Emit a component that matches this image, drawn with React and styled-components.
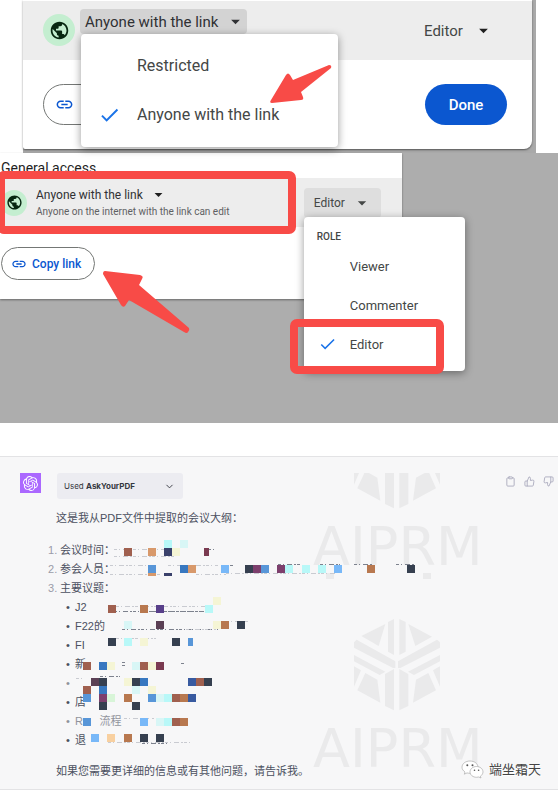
import React from 'react';
import styled, { createGlobalStyle, css } from 'styled-components';
import { SiOpenai } from 'react-icons/si';
import { MdPublic, MdLink, MdCheck, MdArrowDropDown } from 'react-icons/md';
import { FiClipboard, FiThumbsUp, FiThumbsDown, FiChevronDown } from 'react-icons/fi';

const C = {
  brick: '#a0604f',
  peach: '#d8996b',
  navy: '#3a416b',
  cyan: '#b8f8f8',
  ice: '#d8f6f6',
  cream: '#f5f5d5',
  wine: '#7a3a50',
  blue: '#5896d8',
  azure: '#3878c0',
  sky: '#78b8f8',
  dark: '#364050',
  plum: '#7d3f6d',
  copper: '#b8784f',
  violet: '#583f8a',
  mauve: '#5b4055',
  royal: '#385aa0',
  mint: '#d8f5d8',
  sand: '#f8d0a0'
}

// blocks that hide the private parts of the outline: x, y, colour, width, height
const blocks = [
  [108, 0, 'cyan'], [124, 0, 'ice'],
  [68, 8, 'brick'], [92, 8, 'peach'], [108, 8, 'navy'], [116, 8, 'cream'], [148, 8, 'wine', 5],
  [92, 25, 'blue'], [92, 33, 'peach', 8, 3], [108, 33, 'navy', 8, 3], [124, 25, 'azure'], [132, 25, 'peach'],
  [165, 25, 'sky'], [189, 25, 'dark'], [197, 25, 'plum'], [205, 25, 'blue'], [221, 25, 'plum'], [229, 25, 'cyan'],
  [246, 25, 'cyan'], [262, 25, 'cyan'], [278, 25, 'sky'], [311, 25, 'copper'], [351, 25, 'dark'],
  [157, 57, 'cream'], [52, 65, 'brick'], [84, 65, 'copper'], [100, 65, 'violet'], [149, 65, 'cyan'],
  [68, 81, 'ice'], [100, 81, 'mauve'], [157, 81, 'cream'], [165, 81, 'copper'], [181, 81, 'dark'],
  [52, 98, 'dark'], [68, 98, 'cyan'], [84, 98, 'cream'], [116, 98, 'dark'], [132, 98, 'blue', 5],
  [27, 122, 'brick'], [43, 122, 'azure'], [51, 122, 'cream'], [76, 122, 'ice'], [84, 122, 'brick'],
  [92, 122, 'cream'], [100, 122, 'wine'],
  [35, 138, 'mauve'], [43, 138, 'dark'], [68, 138, 'cream'], [76, 138, 'dark'], [84, 138, 'azure'],
  [132, 138, 'royal'], [140, 138, 'brick'], [148, 138, 'dark'],
  [27, 146, 'brick'], [43, 146, 'azure'], [76, 146, 'ice'], [92, 146, 'cream'],
  [27, 154, 'blue'], [43, 154, 'plum'], [51, 154, 'mint'], [68, 154, 'copper'], [92, 154, 'blue'],
  [100, 154, 'ice'], [108, 154, 'cyan'], [116, 154, 'brick'], [124, 154, 'copper'], [132, 154, 'royal'],
  [43, 162, 'dark'], [76, 162, 'dark'],
  [27, 178, 'blue'], [84, 178, 'sky'], [100, 178, 'ice'], [108, 178, 'cyan'], [116, 178, 'brick'], [124, 178, 'copper'],
  [35, 194, 'sky'], [51, 194, 'sand'], [68, 194, 'copper'], [84, 194, 'dark'], [100, 194, 'dark']
]

// broken strokes left between the blocks: x, y, length, strong
const scraps = [
  [58, 9, 50], [58, 16, 60], [152, 9, 6, true], [54, 25, 36], [54, 34, 50], [112, 25, 50], [140, 34, 30],
  [165, 25, 12, true], [222, 24, 24, true], [264, 24, 20, true], [298, 24, 18, true], [340, 24, 18, true],
  [170, 33, 110], [60, 66, 90], [58, 71, 100, true], [86, 71, 60, true], [66, 89, 96, true],
  [170, 81, 24], [130, 89, 30], [60, 98, 40], [44, 136, 20, true], [20, 138, 8], [54, 105, 4, true],
  [66, 122, 4, true], [66, 125, 4, true], [125, 123, 3, true], [68, 178, 30], [52, 202, 85], [86, 203, 26, true]
]

const GlobalStyle = createGlobalStyle`
*{
  box-sizing:border-box;
}
body{
  margin:0;
  background:#fff;
  font-family:Roboto, "Noto Sans CJK SC", sans-serif;
  color:#444746;
}
button, select{
  font-family:inherit;
  color:inherit;
  background:none;
  border:0;
  padding:0;
  margin:0;
  text-align:left;
}
`

const Picker = ({ label, name, options, size, wide }) => (
  <PickerWrap>
    <Select aria-label={label} defaultValue={name} $size={size} $wide={wide}>
      {options.map(o => <option key={o}>{o}</option>)}
    </Select>
    <MdArrowDropDown size={size > 12 ? 21 : 19} />
  </PickerWrap>
)

const Watermark = () => (
  <WatermarkSvg width="184" height="310" viewBox="0 0 184 310" aria-hidden="true">
    <defs>
      <g id="hex">
        <path d="M250 108 322 72 302 138zM330 66 348 57V165L330 155zM364 57 383 66V155L364 165zM391 72 462 110 412 138z" />
        <path d="M228 127 236 119 352 184V204H345L228 143zM486 127 477 119 360 184V204H367L486 143z" />
        <path d="M228 165 322 215 305 225 228 184zM486 165 390 215 408 225 486 184z" />
        <path d="M228 199 249 211 228 260zM486 199 465 211 486 260z" />
        <path d="M262 219 298 239 307 308 238 271zM451 219 414 239 405 308 474 271z" />
        <path d="M321 222 348 207V331L321 318zM364 207 391 222V318L364 331z" />
      </g>
    </defs>
    <use href="#hex" transform="translate(-35 -75) scale(.3333)" />
    <text x="0" y="92">AIPRM</text>
    <path d="M13 100h8v6h-8zM110 100h8v6h-8z" />
    <use href="#hex" transform="translate(-35 127) scale(.3333)" />
    <text x="0" y="294">AIPRM</text>
  </WatermarkSvg>
)

export default function App() {
  return (
    <main>
      <GlobalStyle />
      <LinkShot>
        <LinkPanel>
          <LinkRow>
            <Globe $size={32}><MdPublic size={21} /></Globe>
            <MenuAnchor>
              <DropButton $size={15} aria-haspopup="menu" aria-expanded="true">
                Anyone with the link
                <MdArrowDropDown size={21} />
              </DropButton>
              <LinkMenu role="menu">
                <MenuItem role="menuitem" $size={16}>Restricted</MenuItem>
                <MenuItem role="menuitem" $size={16}>
                  <MdCheck size={23} />Anyone with the link
                </MenuItem>
              </LinkMenu>
            </MenuAnchor>
            <Picker label="Role" name="Editor" options={['Viewer', 'Commenter', 'Editor']} size={15} wide={52} />
          </LinkRow>
          <LinkFooter>
            <Pill $size={15} aria-label="Copy link"><MdLink size={19} />Copy link</Pill>
            <DoneButton>Done</DoneButton>
          </LinkFooter>
        </LinkPanel>
        <LinkArrow width="64" height="40" viewBox="0 0 64 40">
          <path d="M2 35 17 10Q19 7 21 10L24 15 60 0Q63 0 62 3L32 27 34 32Q35 35 32 35L3 38Q0 38 2 35z" />
        </LinkArrow>
      </LinkShot>

      <AccessShot>
        <AccessPanel>
          <h2>General access</h2>
          <AccessRow>
            <Globe $size={26}><MdPublic size={17} /></Globe>
            <AccessText>
              <Picker label="General access" name="Anyone with the link" options={['Restricted', 'Anyone with the link']} size={12} wide={116} />
              <small>Anyone on the internet with the link can edit</small>
            </AccessText>
            <MenuAnchor>
              <RoleButton aria-haspopup="menu" aria-expanded="true">
                Editor
                <MdArrowDropDown size={20} />
              </RoleButton>
              <RoleMenu role="menu">
                <h3>ROLE</h3>
                <MenuItem role="menuitem" $size={13}>Viewer</MenuItem>
                <MenuItem role="menuitem" $size={13}>Commenter</MenuItem>
                <MenuItem role="menuitem" $size={13}><MdCheck size={19} />Editor</MenuItem>
                <RoleFrame />
              </RoleMenu>
            </MenuAnchor>
            <AccessFrame />
          </AccessRow>
          <Pill $size={12}><MdLink size={16} />Copy link</Pill>
        </AccessPanel>
        <AccessArrow width="88" height="64" viewBox="0 0 88 64">
          <path d="M2 1 37 5Q41 6 39 9L36 15 86 58Q87 60 85 62 84 64 81 62L26 30 22 36Q20 38 18 35L0 4Q0 1 2 1z" />
        </AccessArrow>
      </AccessShot>

      <Chat>
        <Watermark />
        <Avatar><SiOpenai size={15} /></Avatar>
        <Answer>
          <Plugin aria-expanded="false">
            <span>Used <b>AskYourPDF</b></span>
            <FiChevronDown size={11} />
          </Plugin>
          <p>这是我从PDF文件中提取的会议大纲：</p>
          <Outline>
            <ol>
              <li>会议时间：</li>
              <li>参会人员：</li>
              <li>主要议题：
                <ul>
                  <li>J2</li>
                  <li>F22的</li>
                  <li>FI</li>
                  <li>新</li>
                  <Blank />
                  <li>店</li>
                  <Blank>R&emsp;&ensp;流程</Blank>
                  <li>退</li>
                </ul>
              </li>
            </ol>
            <Mosaic width="370" height="210" viewBox="0 0 370 210" aria-hidden="true">
              {scraps.map(([x, y, w, strong], i) => (
                <line key={i} x1={x} y1={y + 0.5} x2={x + w} y2={y + 0.5} stroke={strong ? '#7d828e' : '#c9cbd1'} />
              ))}
              {blocks.map(([x, y, c, w = 8, h = 8], i) => (
                <rect key={i} x={x} y={y} width={w} height={h} fill={C[c]} />
              ))}
            </Mosaic>
          </Outline>
          <p>如果您需要更详细的信息或有其他问题，请告诉我。</p>
        </Answer>
        <Tools>
          <button aria-label="Copy"><FiClipboard size={11} /></button>
          <button aria-label="Good answer"><FiThumbsUp size={11} /></button>
          <button aria-label="Bad answer"><FiThumbsDown size={11} /></button>
        </Tools>
        <Credit>
          <svg width="23" height="19" viewBox="0 0 23 19">
            <path d="M9 1C4.500 1 1 3.700 1 7.200 1 9.200 2.200 10.800 4 12L3.300 14.200 6 12.900C7 13.200 8 13.300 9 13.300 13.500 13.300 17 10.600 17 7.200S13.500 1 9 1z" />
            <path d="M15.500 6.500C11.900 6.500 9 8.900 9 11.900S11.900 17.300 15.500 17.300C16.300 17.300 17.100 17.200 17.800 17L20 18 19.400 16.200C21 15.200 22 13.600 22 11.900 22 8.900 19.100 6.500 15.500 6.500z" />
            <g><circle cx="6.300" cy="5.200" r="1" /><circle cx="11.500" cy="5.200" r="1" /><circle cx="13.500" cy="10.200" r=".8" /><circle cx="17.600" cy="10.200" r=".8" /></g>
          </svg>
          端坐霜天
        </Credit>
      </Chat>
    </main>
  )
}

const PickerWrap = styled.label`
display:flex;
align-items:center;
color:#1f1f1f;
`
const Select = styled.select`
appearance:none;
color:#444746;
font-size:${p => p.$size}px;
line-height:18px;
width:${p => p.$wide}px;
margin-right:-3px;
`
const MenuAnchor = styled.div`
position:relative;
`
const Globe = styled.span`
display:flex;
flex:none;
align-items:center;
justify-content:center;
width:${p => p.$size}px;
height:${p => p.$size}px;
border-radius:50%;
background:#c4eed0;
color:#072711;
`
const menu = css`
position:absolute;
z-index:2;
display:flex;
flex-direction:column;
background:#fff;
border-radius:4px;
box-shadow:0 2px 8px rgba(0,0,0,.4);
`
const MenuItem = styled.button`
position:relative;
color:#444746;
font-size:${p => p.$size}px;
> svg{
  position:absolute;
  top:50%;
  transform:translateY(-50%);
  color:#1a73e8;
}
`
const DropButton = styled.button`
display:flex;
align-items:center;
gap:7px;
height:25px;
padding:0 0 0 5px;
width:167px;
border-radius:4px;
background:#d3d3d3;
font-size:${p => p.$size}px;
color:#303134;
white-space:nowrap;
`
const Pill = styled.button`
display:flex;
align-items:center;
gap:${p => p.$size > 12 ? 9 : 5}px;
height:${p => p.$size > 12 ? 41 : 33}px;
padding:0 13px 0 ${p => p.$size > 12 ? 11 : 9}px;
border:1px solid #747775;
border-radius:24px;
background:#fff;
color:#0b57d0;
font-size:${p => p.$size}px;
font-weight:500;
white-space:nowrap;
`
const LinkShot = styled.section`
position:relative;
margin:0 22px 0 23px;
padding:0 4px 4px 0;
background:#a9a9a9;
`
const LinkPanel = styled.div`
padding-top:1px;
background:#fff;
border-radius:0 0 8px 2px;
box-shadow:0 1px 2px rgba(0,0,0,.5);
`
const LinkRow = styled.div`
display:flex;
height:59px;
padding:0 38px 0 20px;
background:#ededed;
> ${Globe}{
  margin:13px 5px 0 0;
}
> ${MenuAnchor}{
  margin:8px auto 0 0;
}
`
const LinkMenu = styled.div`
${menu}
top:25px;
left:1px;
width:257px;
padding:7px 0 8px;
> ${MenuItem}{
  height:49px;
  padding-left:56px;
}
> ${MenuItem} > svg{
  left:17px;
}
`
const LinkFooter = styled.div`
display:flex;
justify-content:space-between;
padding:24px 25px 24px 20px;
`
const DoneButton = styled.button`
width:82px;
height:41px;
border-radius:24px;
background:#0b57d0;
color:#fff;
font-size:15px;
font-weight:500;
text-align:center;
`
const LinkArrow = styled.svg`
position:absolute;
z-index:3;
left:246px;
top:65px;
fill:#f84b47;
`
const AccessShot = styled.section`
position:relative;
height:270px;
background:#adadad;
`
const AccessPanel = styled.div`
width:72%;
height:146px;
background:#fff;
box-shadow:0 1px 2px rgba(0,0,0,.4);
> h2{
  margin:0;
  padding:6px 0 0 1px;
  height:25px;
  font-size:14px;
  line-height:18px;
  font-weight:400;
  color:#1f1f1f;
}
> ${Pill}{
  margin:20px 0 0 1px;
}
`
const AccessRow = styled.div`
position:relative;
display:flex;
align-items:center;
height:49px;
padding:0 21px 0 1px;
background:#ededed;
> ${MenuAnchor}{
  margin-left:auto;
}
`
const AccessText = styled.div`
display:flex;
flex-direction:column;
padding-left:9px;
white-space:nowrap;
select{
  color:#303134;
}
small{
  font-size:10px;
  line-height:16px;
  color:#5f6163;
}
`
const RoleButton = styled.button`
display:flex;
align-items:center;
gap:7px;
width:77px;
height:30px;
padding-left:10px;
border-radius:4px;
background:#dedede;
font-size:12px;
`
const RoleMenu = styled.div`
${menu}
top:29px;
left:0;
width:161px;
padding:13px 0 7px;
> h3{
  margin:0 0 3px 13px;
  font-size:10px;
  line-height:14px;
  font-weight:500;
}
> ${MenuItem}{
  height:39px;
  padding-left:46px;
}
> ${MenuItem} > svg{
  left:14px;
}
`
const frame = css`
position:absolute;
z-index:3;
border:8px solid #f84b47;
border-radius:7px;
pointer-events:none;
`
const AccessFrame = styled.div`
${frame}
top:-7px;
left:-3px;
width:299px;
height:63px;
`
const RoleFrame = styled.div`
${frame}
left:-14px;
bottom:-3px;
width:154px;
height:55px;
`
const AccessArrow = styled.svg`
position:absolute;
left:103px;
top:117px;
fill:#f84b47;
`
const Chat = styled.section`
position:relative;
display:flex;
margin-top:33px;
padding:16px 4px 8px 20px;
border:solid #e3e3e5;
border-width:1px 0;
background:#f7f7f8;
color:#4b5060;
font-family:"Liberation Sans", "Noto Sans CJK SC", sans-serif;
font-size:11px;
line-height:19px;
`
const WatermarkSvg = styled.svg`
position:absolute;
top:16px;
right:61px;
fill:#eaeaeb;
font-family:"DejaVu Sans", sans-serif;
font-size:54px;
`
const Avatar = styled.span`
display:flex;
flex:none;
align-items:center;
justify-content:center;
width:21px;
height:20px;
margin-right:15px;
background:#ab68ff;
color:#fff;
`
const Answer = styled.div`
position:relative;
flex:1;
> p{
  margin:0;
}
> button + p{
  margin:10px 0 13px;
}
`
const Plugin = styled.button`
display:flex;
align-items:center;
justify-content:space-between;
width:126px;
height:26px;
margin-left:1px;
padding:0 8px 0 7px;
border-radius:3px;
background:#ececf1;
color:#353740;
font-family:Inter, sans-serif;
font-size:8px;
`
const Outline = styled.div`
position:relative;
margin-bottom:12px;
ol, ul{
  margin:0;
  padding-left:4px;
  list-style:none;
}
ol{
  counter-reset:n;
}
ul{
  padding-left:15px;
}
li{
  position:relative;
}
ol > li{
  counter-increment:n;
}
ol > li::before{
  content:counter(n) ".";
  position:absolute;
  left:-12px;
  color:#9a9ca8;
}
ul > li::before{
  content:"•";
  position:absolute;
  left:-9px;
}
`
const Blank = styled.li`
min-height:19px;
opacity:.6;
`
const Mosaic = styled.svg`
position:absolute;
top:-1px;
left:0;
line{
  stroke-dasharray:3 2 1 3 5 2 2 1;
}
`
const Tools = styled.div`
display:flex;
gap:8px;
height:16px;
color:#acacbe;
button{
  display:flex;
  align-items:center;
}
`
const Credit = styled.div`
position:absolute;
right:17px;
bottom:10px;
display:flex;
align-items:center;
gap:5px;
color:#444;
font-size:13px;
text-shadow:1px 1px 0 #fff;
path{
  fill:#fff;
  stroke:#aaa;
  stroke-width:.7;
}
g{
  fill:#555;
}
`
